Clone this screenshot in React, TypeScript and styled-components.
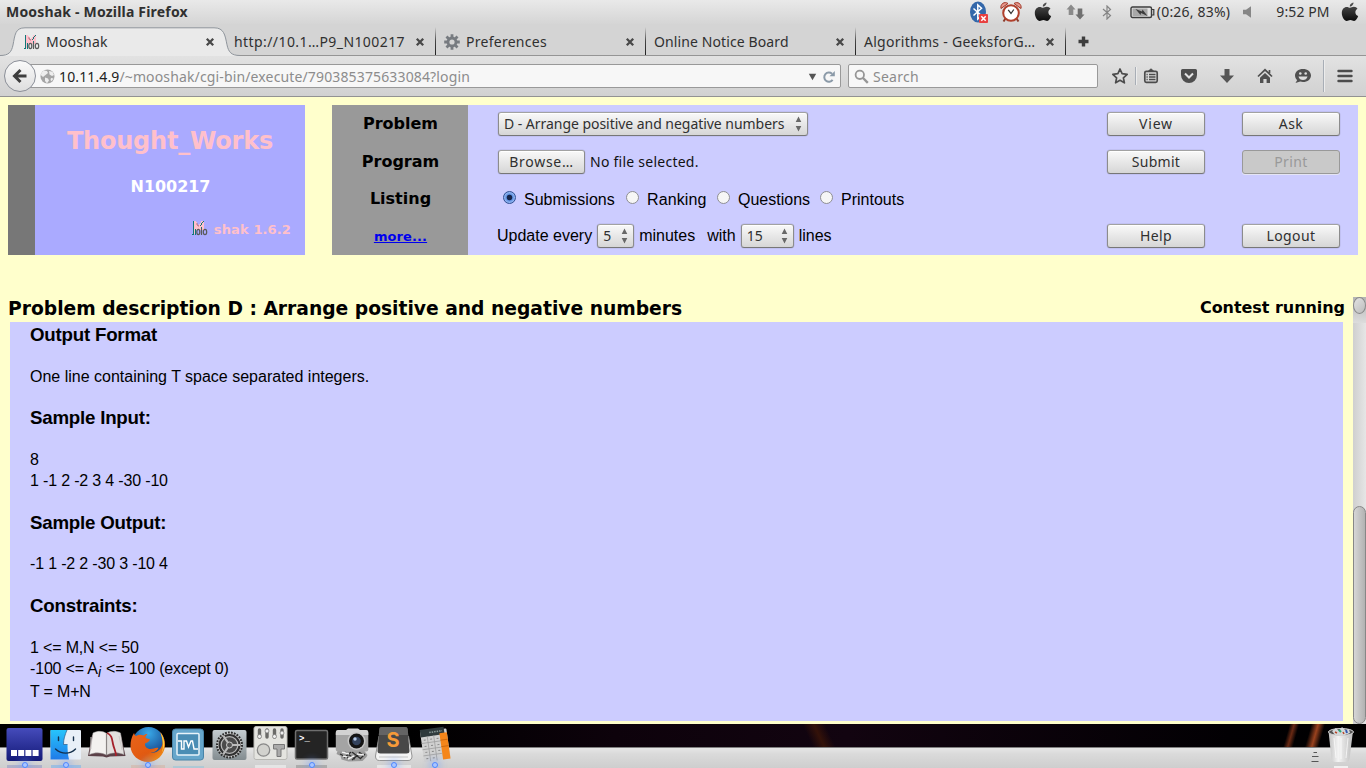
import React from "react";
import styled, { createGlobalStyle } from "styled-components";

const ui = `"Noto Sans", "Open Sans", sans-serif`;
const helv = `"Liberation Sans", Arial, sans-serif`;
const dejavu = `"DejaVu Sans", sans-serif`;

const GlobalStyle = createGlobalStyle`
  * { box-sizing: border-box; }
  body { margin: 0; overflow: hidden; }
  svg { display: block; flex: none; }
`;

const Desktop = styled.div`
  width: 1366px;
  height: 768px;
  display: flex;
  flex-direction: column;
  overflow: hidden;
  background: #ffffcc;
  color: #000;
`;

/* ---------- window chrome ---------- */

const Label = styled.span<{ $ls?: number; $bold?: boolean; $color?: string }>`
  font: ${(p) => (p.$bold ? "bold" : "normal")} 14px/18px ${ui};
  letter-spacing: ${(p) => p.$ls ?? 0.2}px;
  color: ${(p) => p.$color ?? "#303030"};
  white-space: pre;
`;

const TitleBar = styled.header`
  height: 24px;
  flex: none;
  display: flex;
  align-items: center;
  padding: 0 7px 0 6px;
  background: linear-gradient(#e9e9e9, #d5d5d5);
`;

const Tray = styled.div`
  margin-left: auto;
  display: flex;
  align-items: center;
  height: 24px;
`;

const Slot = styled.div<{ $w: number; $ml?: number }>`
  width: ${(p) => p.$w}px;
  margin-left: ${(p) => p.$ml ?? 0}px;
  display: flex;
  justify-content: center;
  white-space: nowrap;
`;

const TabStrip = styled.nav`
  position: relative;
  height: 32px;
  flex: none;
  display: flex;
  padding-left: 15px;
  background: #d4d4d4;
  border-bottom: 1px solid #959595;
`;

const TabShape = styled.svg`
  position: absolute;
  left: 0;
  top: 3px;
`;

const Tab = styled.div<{ $divider?: boolean }>`
  position: relative;
  width: 210px;
  height: 31px;
  margin-top: 1px;
  padding: 3px 10px 0 9px;
  display: flex;
  align-items: center;
  gap: 6px;
  &::after {
    content: "";
    display: ${(p) => (p.$divider ? "block" : "none")};
    position: absolute;
    right: -1px;
    top: 2px;
    width: 1px;
    height: 28px;
    background: linear-gradient(#d4d4d400, #444 50%, #222);
  }
`;

const TabClose = styled.span`
  margin-left: auto;
`;

const NewTab = styled.span`
  margin: 12px 0 0 12.5px;
`;

const NavBar = styled.div`
  height: 41px;
  flex: none;
  display: flex;
  align-items: center;
  background: linear-gradient(#e2e2e2, #d1d1d1);
  border-bottom: 1px solid #929292;
`;

const BackButton = styled.div`
  position: relative;
  z-index: 1;
  width: 32px;
  height: 32px;
  margin: 0 -16px 0 4px;
  flex: none;
  border: 1px solid #8b8f98;
  border-radius: 50%;
  background: linear-gradient(#fafafa, #dedede);
  display: flex;
  align-items: center;
  justify-content: center;
`;

const Field = styled.div<{ $w: number; $pl: number }>`
  width: ${(p) => p.$w}px;
  height: 24px;
  padding: 1px 5px 0 ${(p) => p.$pl}px;
  border: 1px solid #999;
  border-radius: 2px;
  background: #f7f7f7;
  display: flex;
  align-items: center;
  gap: 4px;
  ${Label} {
    line-height: 19px;
  }
`;

const FieldEnd = styled.div`
  margin-left: auto;
  display: flex;
  align-items: center;
  gap: 6px;
`;

const SearchField = styled(Field)`
  margin-left: 7px;
`;

const Divider = styled.i<{ $h: number; $ml: number }>`
  width: 1px;
  height: ${(p) => p.$h}px;
  margin-left: ${(p) => p.$ml}px;
  background: #a8aeb6;
  box-shadow: 1px 0 #ececec;
`;

/* ---------- contest toolbar ---------- */

const Toolbar = styled.section`
  height: 150px;
  margin: 8px 8px 0;
  flex: none;
  display: flex;
`;

const Stripe = styled.div`
  width: 27px;
  background: #777777;
`;

const Team = styled.div`
  width: 270px;
  margin-right: 27px;
  padding-top: 21px;
  background: #aaaaff;
  display: flex;
  flex-direction: column;
  align-items: center;
  font-family: ${dejavu};
  font-weight: bold;
`;

const TeamName = styled.div`
  font-size: 24px;
  line-height: 30px;
  letter-spacing: -0.22px;
  color: #ffc0cb;
`;

const TeamId = styled.div`
  margin-top: 21px;
  padding-left: 1px;
  font-size: 16px;
  line-height: 20px;
  letter-spacing: -0.05px;
  color: #fff;
`;

const Version = styled.div`
  align-self: flex-end;
  margin: 19px 14px 0 0;
  display: flex;
  align-items: center;
  gap: 6px;
  font-size: 13px;
  line-height: 20px;
  letter-spacing: 0.12px;
  color: #ffc0cb;
  span {
    padding-top: 4px;
  }
`;

const rows = "37px 39px 35px 39px";

const Names = styled.div`
  width: 136px;
  padding-left: 1px;
  background: #999999;
  display: grid;
  grid-template-rows: ${rows};
  align-items: center;
  justify-items: center;
  font: bold 16px/20px ${dejavu};
`;

const MoreLink = styled.a`
  font-size: 13px;
  color: #0000ee;
  text-decoration: underline;
  letter-spacing: 0.1px;
  padding-top: 3px;
`;

const Controls = styled.div`
  flex: 1;
  padding: 0 18px 0 29px;
  background: #ccccff;
  display: grid;
  grid-template-rows: ${rows};
`;

const ControlRow = styled.div`
  display: flex;
  align-items: center;
  font: 16px/20px ${helv};
  white-space: pre;
`;

const Button = styled.button<{ $w: number; $ls?: number }>`
  width: ${(p) => p.$w}px;
  height: 24px;
  padding: 0;
  border: 1px solid #8c8c8c;
  border-color: #a2a2a2 #8c8c8c #777;
  border-radius: 3px;
  background: linear-gradient(#f9f9f9, #d6d6d6);
  box-shadow: inset 0 1px #fff, 0 0 0 0.5px rgba(120, 120, 150, 0.25);
  font: 14px/20px ${ui};
  letter-spacing: ${(p) => p.$ls ?? 0.4}px;
  color: #303030;
  &:disabled {
    background: #c9c9c9;
    border-color: #999;
    box-shadow: 0 1px #e4e4f4;
    color: #999;
  }
`;

const Picker = styled(Button)`
  display: flex;
  align-items: center;
  justify-content: space-between;
  padding: 0 5px;
  white-space: nowrap;
`;

const Actions = styled.div`
  margin-left: auto;
  display: flex;
  gap: 37px;
`;

const Gap = styled.span<{ $w: number }>`
  width: ${(p) => p.$w}px;
`;

const RadioLabel = styled.label<{ $w: number; $ls?: number }>`
  width: ${(p) => p.$w}px;
  display: flex;
  align-items: center;
  gap: 8px;
  padding-top: 2px;
  letter-spacing: ${(p) => p.$ls ?? 0}px;
`;

const Radio = styled.i<{ $on?: boolean }>`
  width: 13px;
  height: 13px;
  margin-top: -4px;
  flex: none;
  border: 1px solid ${(p) => (p.$on ? "#2f4f93" : "#8e8e93")};
  border-radius: 50%;
  background: ${(p) =>
    p.$on
      ? "radial-gradient(circle, #16244a 0 2.4px, #5d8ee0 3.2px, #8fb4f0 5px, #5580cf)"
      : "#f6f6f6"};
`;

/* ---------- problem frame ---------- */

const Frame = styled.main`
  flex: none;
  height: 427px;
  margin-top: 42px;
  display: flex;
`;

const Page = styled.article`
  flex: 1;
  padding: 0 10px;
`;

const Heading = styled.div`
  height: 25px;
  margin: 0 -2px;
  display: flex;
  justify-content: space-between;
  font-family: ${dejavu};
  font-weight: bold;
  white-space: nowrap;
`;

const ProblemTitle = styled.span`
  font-size: 18.72px;
  line-height: 23px;
  letter-spacing: -0.01px;
`;

const Status = styled.span`
  font-size: 16px;
  line-height: 21px;
  letter-spacing: -0.05px;
`;

const Statement = styled.div`
  height: 399px;
  padding: 2px 20px 0;
  background: #ccccff;
  font: 16px/21px ${helv};
`;

const H3 = styled.h3<{ $mt?: number }>`
  margin: ${(p) => p.$mt ?? 20}px 0 0;
  font-size: 18.72px;
  line-height: 21px;
  letter-spacing: -0.22px;
`;

const Para = styled.p<{ $ls?: number; $mt?: number }>`
  margin: ${(p) => p.$mt ?? 21}px 0 0;
  letter-spacing: ${(p) => p.$ls ?? -0.17}px;
  sub {
    margin-right: 1px;
    font-style: italic;
    font-size: 14px;
    line-height: 18px;
    vertical-align: -2.5px;
  }
`;

const Scrollbar = styled.aside`
  width: 13px;
  display: flex;
  flex-direction: column;
  background: linear-gradient(90deg, #cfcfcf, #e6e6e6);
`;

const Stepper = styled.div`
  height: 26px;
  background: linear-gradient(#b4b4b4, #dcdcdc);
  &::before {
    content: "";
    display: block;
    height: 15px;
    border: 1px solid #8a8a8a;
    border-radius: 50%;
    background: linear-gradient(135deg, #e2e2e2, #bcbcbc);
  }
`;

const Thumb = styled.div`
  height: 218px;
  margin-top: auto;
  border: 1px solid #878787;
  border-radius: 7px;
  background: linear-gradient(90deg, #d6d6d6, #b2b2b2);
`;

/* ---------- dock ---------- */

const Dock = styled.footer`
  height: 44px;
  flex: none;
  display: flex;
  padding: 0 3px 0 3.5px;
  background:
    linear-gradient(#808080, #808080) 0 23px / 100% 1px no-repeat,
    linear-gradient(#e6e6e6, #dadada 30%, #cecece) 0 24px / 100% 20px no-repeat,
    linear-gradient(106deg, transparent 34%, #6a2a14 50%, transparent 68%) 1280px 0 / 22px 23px no-repeat,
    linear-gradient(106deg, transparent 30%, #9a421e 50%, transparent 70%) 1301px 0 / 28px 23px no-repeat,
    linear-gradient(65deg, transparent 30%, #341209 50%, transparent 70%) 796px 0 / 46px 23px no-repeat,
    linear-gradient(90deg, #000 30%, #0d020b 45%, #120410 62%, #020003 90%, #000);
`;

const DockCell = styled.div<{ $running?: boolean }>`
  position: relative;
  width: 41px;
  height: 44px;
  &::after {
    content: "";
    display: ${(p) => (p.$running ? "block" : "none")};
    position: absolute;
    left: 18px;
    bottom: 0;
    width: 4px;
    height: 4px;
    border: 1px solid #4f86ff;
    border-radius: 50%;
    background: #a9c6ff;
    box-shadow: 0 0 6px 4px rgba(110, 155, 255, 0.3);
  }
`;

const DockEnd = styled.div`
  margin-left: auto;
  display: flex;
  gap: 3px;
`;

/* ---------- small glyphs ---------- */

const Moo = () => (
  <svg width="16" height="15" viewBox="0 0 16 15">
    <path d="M2 0h2v1h1v2h1v1h1V3h1V2h1V0h3v9H2z" fill="#ffc0cb" />
    <path d="M2 9h2v4H2z" fill="#ffc0cb" />
    <g shapeRendering="crispEdges" fill="#107878">
      <path d="M1 0h1v13H1zM0 13h2v1H0zM3 8h1v6H3zM10 1h1v1h-1zM9 2h1v2H9zM8 4h1v1H8zM9 6h1v3H9zM11 0h1v1h-1z" />
    </g>
    <path d="M5 2v2h1v1h1" stroke="#a05a68" strokeWidth=".7" fill="none" />
    <g fill="none" stroke="#5a5a5a" strokeWidth="1.200">
      <ellipse cx="6.300" cy="11" rx="1.500" ry="2.700" />
      <path d="M9.500 7.500v6.500" />
      <ellipse cx="13" cy="11" rx="1.700" ry="2.700" />
    </g>
  </svg>
);

const CloseX = () => (
  <svg width="10" height="10" viewBox="0 0 10 10">
    <path d="M1.800 1.800l6.400 6.400M8.200 1.800L1.800 8.200" stroke="#484848" strokeWidth="2.300" />
  </svg>
);

const Gear = () => (
  <svg width="16" height="16" viewBox="0 0 16 16" stroke="#777b80" fill="none">
    <circle cx="8" cy="8" r="4" strokeWidth="2.800" />
    <g strokeWidth="2.800">
      <path d="M8 .2v3M8 12.800v3M.2 8h3M12.800 8h3M2.500 2.500l2.200 2.200M11.300 11.300l2.200 2.200M13.500 2.500l-2.200 2.200M4.700 11.300l-2.200 2.200" />
    </g>
  </svg>
);

const Apple = () => (
  <svg width="18" height="20" viewBox="0 0 18 20">
    <defs>
      <linearGradient id="apple" x1="0" y1="0" x2="0" y2="1">
        <stop offset="0" stopColor="#555" />
        <stop offset="1" stopColor="#0c0c0c" />
      </linearGradient>
    </defs>
    <path
      d="M12.500.5c.2 1.800-1.600 4-3.700 4C8.500 2.600 10.400.8 12.500.5zM9 5.800c1 0 2.100-1 3.900-1 1.600 0 2.900.8 3.600 1.900-3.200 1.900-2.600 6 .7 7.300-.8 2.200-2.300 5-4.100 5-1.500 0-2-.9-3.700-.9s-2.300.9-3.700.9C3.400 19 .8 14.800.8 11c0-3.800 2.400-6 4.800-6C7.200 5 8.300 5.800 9 5.800z"
      fill="url(#apple)"
    />
  </svg>
);

const BluetoothBadge = () => (
  <svg width="22" height="23" viewBox="0 0 22 23">
    <ellipse cx="11" cy="11" rx="8" ry="10.500" fill="#3468aa" />
    <path d="M6.500 7.500l8 7.300-3.700 3.200V4l3.700 3.200-8 7.300" fill="none" stroke="#fff" strokeWidth="1.500" />
    <rect x="12" y="13" width="9" height="9" rx="1" fill="#e84040" />
    <path d="M14.300 15.300l4.400 4.400M18.700 15.300l-4.400 4.400" stroke="#fff" strokeWidth="1.500" />
  </svg>
);

const Alarm = () => (
  <svg width="22" height="22" viewBox="0 0 22 22">
    <path d="M5.500 17.500L3.500 20.500M16.500 17.500l2 3" stroke="#8b3b2a" strokeWidth="2" />
    <path d="M1 7.500C0 3 4.500 0 8 2.500zM21 7.500C22 3 17.500 0 14 2.500z" fill="#e8988c" stroke="#a03828" />
    <circle cx="11" cy="12" r="7.800" fill="#fff" stroke="#b0402c" strokeWidth="2" />
    <path d="M8.200 8.800L11 12.500l2.800-4" fill="none" stroke="#333" strokeWidth="1.300" />
  </svg>
);

const UpDown = () => (
  <svg width="19" height="16" viewBox="0 0 19 16">
    <path d="M5 .5l4.500 5H7.300V11H2.700V5.500H.5z" fill="#8b8b8b" />
    <path d="M14 15.500l4.500-5h-2.200V4.500h-4.600v6H9.500z" fill="#707070" />
  </svg>
);

const Bluetooth = () => (
  <svg width="10" height="15" viewBox="0 0 10 15">
    <path d="M1 4l7.500 6.500L5 14V1l3.500 3.500L1 11" fill="none" stroke="#858585" strokeWidth="1.200" />
  </svg>
);

const Battery = () => (
  <svg width="25" height="13" viewBox="0 0 25 13">
    <rect x="1" y="1" width="20.500" height="10.500" rx="1.500" fill="#e4e4e4" stroke="#3c3c3c" strokeWidth="1.400" />
    <path d="M22 3.500h1.800v5.500H22" fill="none" stroke="#3c3c3c" strokeWidth="1.200" />
    <rect x="2.500" y="2.500" width="15" height="7.500" fill="#a8a8a8" />
    <path d="M5.500 3l6.500 2.500.5-2 5 6.500-6.500-3-.5 2z" fill="#3c3c3c" />
  </svg>
);

const Speaker = () => (
  <svg width="9" height="12" viewBox="0 0 9 12">
    <path d="M0 3.800h3L8 .3v11.400L3 8.200H0z" fill="#868686" />
  </svg>
);

const BackArrow = () => (
  <svg width="16" height="16" viewBox="0 0 16 16">
    <path d="M8.500 2L2.500 8l6 6M3 8h11.500" fill="none" stroke="#3e3e3e" strokeWidth="3" />
  </svg>
);

const Globe = () => (
  <svg width="15" height="15" viewBox="0 0 15 15">
    <circle cx="7.500" cy="7.500" r="7" fill="#a5a5a5" />
    <path d="M4 1.500l3 .5 1 2-2.500 2L3 8 .8 6C1.200 4 2.500 2.300 4 1.500zM9 2l3.500.8L14 6l-2 1-2.500-1.500zM5 8.500l3 1 1 2-2 2.800-2-2.300zM11 9l2.500.5-2 2.800-1-1.300z" fill="#eee" />
  </svg>
);

const Reload = () => (
  <svg width="12" height="12" viewBox="0 0 12 12">
    <path d="M9.600 8.800A4.600 4.600 0 1 1 9 2.700" fill="none" stroke="#8b9aa8" strokeWidth="2" />
    <path d="M11.800 0v5.200H6.500z" fill="#8b9aa8" />
  </svg>
);

const Magnifier = () => (
  <svg width="15" height="15" viewBox="0 0 15 15" fill="none" stroke="#969696">
    <circle cx="5.800" cy="5.800" r="4.200" strokeWidth="1.800" />
    <path d="M9 9l4.800 4.800" strokeWidth="2.400" />
  </svg>
);

const Arrows = () => (
  <svg width="7" height="17" viewBox="0 0 7 17" fill="#686868">
    <path d="M3.500 1.500L6.300 7H.7zM3.500 16.500L6.300 11H.7z" />
  </svg>
);

const Star = () => (
  <svg width="18" height="18" viewBox="0 0 18 18">
    <path d="M9 2l2.100 4.700 5.100.6-3.800 3.500 1 5L9 13.300l-4.400 2.500 1-5L1.800 7.300l5.100-.6z" fill="none" stroke="#4c4c4c" strokeWidth="1.700" strokeLinejoin="round" />
  </svg>
);

const ListIcon = () => (
  <svg width="16" height="16" viewBox="0 0 16 16" fill="none" stroke="#4c4c4c">
    <rect x="1.800" y="3.300" width="12.400" height="11" rx="1.500" strokeWidth="1.700" />
    <path d="M5 3.500L8 .8l3 2.700z" fill="#4c4c4c" />
    <path d="M6 6.500h6.500M6 9h6.500M6 11.500h6.500M3.500 6.500h1.200M3.500 9h1.200M3.500 11.500h1.200" strokeWidth="1.300" />
  </svg>
);

const Pocket = () => (
  <svg width="18" height="16" viewBox="0 0 18 16">
    <path d="M2.500 1h13A1.500 1.500 0 0 1 17 2.500V7a8 8 0 0 1-16 0V2.500A1.500 1.500 0 0 1 2.500 1z" fill="#4f4f4f" />
    <path d="M5 5.500l4 4 4-4" fill="none" stroke="#e4e4e4" strokeWidth="2" />
  </svg>
);

const Download = () => (
  <svg width="16" height="16" viewBox="0 0 16 16">
    <path d="M5.500 1h5v6.500H15L8 15 1 7.500h4.500z" fill="#565656" />
  </svg>
);

const Home = () => (
  <svg width="16" height="16" viewBox="0 0 16 16">
    <path d="M1 8.500L8 1.800l7 6.700M12.500 2v3" fill="none" stroke="#505050" strokeWidth="1.700" />
    <path d="M3 9.800l5-4.800 5 4.800V15H9.600v-4H6.400v4H3z" fill="#505050" />
  </svg>
);

const Chat = () => (
  <svg width="18" height="16" viewBox="0 0 18 16">
    <path d="M9 1c4.500 0 8 2.700 8 6.500S13.500 14 9 14c-1 0-2-.1-2.800-.4L1.500 15l1.700-3C1.800 11 1 9.300 1 7.500 1 3.700 4.500 1 9 1z" fill="#505050" />
    <circle cx="6.300" cy="5.500" r="1.300" fill="#ddd" />
    <circle cx="11.700" cy="5.500" r="1.300" fill="#ddd" />
    <path d="M4.500 8.500h9c-.5 2.500-2.300 3.500-4.500 3.500S5 11 4.500 8.500z" fill="#ddd" />
  </svg>
);

const Menu = () => (
  <svg width="16" height="14" viewBox="0 0 16 14" stroke="#4c4c4c" strokeWidth="2.400" strokeLinecap="round">
    <path d="M1.500 2h13M1.500 7h13M1.500 12h13" />
  </svg>
);

/* ---------- dock artwork, one 41x44 cell each ---------- */

const art = { width: 41, height: 44, viewBox: "0 0 41 44" };

const Launcher = () => (
  <svg {...art}>
    <defs>
      <linearGradient id="launch" x1="0" y1="0" x2="0" y2="1">
        <stop offset="0" stopColor="#454bbb" />
        <stop offset="1" stopColor="#141a78" />
      </linearGradient>
    </defs>
    <rect x="2.500" y="4" width="36" height="33" rx="2" fill="url(#launch)" />
    <path d="M7 26h6v6H7zM14.200 26h6v6h-6zM21.400 26h6v6h-6zM28.600 26h6v6h-6z" fill="#fff" />
    <path d="M3 41h35v3H3z" fill="#8a8fc4" opacity=".5" />
  </svg>
);

const Finder = () => (
  <svg {...art}>
    <defs>
      <linearGradient id="finder" x1="0" y1="0" x2="0" y2="1">
        <stop offset="0" stopColor="#27c4fb" />
        <stop offset="1" stopColor="#1f7be8" />
      </linearGradient>
    </defs>
    <rect x="5.500" y="6" width="30.500" height="29.500" rx="1" fill="#e9f0f8" />
    <path d="M5.500 6H22c-2 5-3.500 9-3.500 14.500h4c0 5 .3 10 1.500 15H5.500z" fill="url(#finder)" />
    <path d="M13.500 13v3.500M28.500 13v3.500M10.500 25c6 5.500 14.500 5.500 20 0" fill="none" stroke="#15304c" strokeWidth="1.400" strokeLinecap="round" />
    <path d="M22 6c-2 5-3.500 9-3.500 14.500h4" fill="none" stroke="#2a5a8a" strokeWidth=".7" />
    <path d="M6 41h30v3H6z" fill="#80b4ea" opacity=".6" />
  </svg>
);

const Book = () => (
  <svg {...art}>
    <path d="M6 11L2 32l15 .5 3.500 1 3.500-1L39.500 32 35 11z" fill="#5c4148" />
    <path d="M7 9c5-2.500 10-2 13.500.5V31c-5-2.500-11-3-17-.5z" fill="#f3f1ef" stroke="#aaa" strokeWidth=".5" />
    <path d="M34.500 9c-5-2.500-10.500-2-14 .5V31c5-2.500 11.500-3 17.500-.5z" fill="#e3e0de" stroke="#aaa" strokeWidth=".5" />
    <path d="M20.500 9.500V31" stroke="#8a8584" strokeWidth="1.200" />
    <path d="M21 9c5 2 5 6 6 11s3 7 3 12" fill="none" stroke="#a5202a" strokeWidth="1.800" />
    <path d="M5 13v12M33 12l3 14" stroke="#d0cccb" />
  </svg>
);

const Firefox = () => (
  <svg {...art}>
    <defs>
      <radialGradient id="fxblue" cx=".5" cy=".2" r=".8">
        <stop offset="0" stopColor="#38a8e8" />
        <stop offset="1" stopColor="#12357c" />
      </radialGradient>
      <linearGradient id="fxfox" x1="0" y1="0" x2="1" y2="1">
        <stop offset="0" stopColor="#e8641c" />
        <stop offset=".6" stopColor="#e25a10" />
        <stop offset="1" stopColor="#f5a41c" />
      </linearGradient>
    </defs>
    <circle cx="21.500" cy="19" r="16" fill="url(#fxblue)" />
    <path d="M33 8c3 3 5.500 8 5 14-1 9-8 16-17 16S3.500 31 3.500 22c0-5 1-9 3.500-13 .5 1.500 1 2.500 2 3 2.500-1.500 5-1.500 7.500-.5 1-1 2.500-1.700 4-1.500-1.500 1.500-2 2.500-2 4 1.500.8 3 1 4.500 1.200-.5 2.500-3 3.300-5 4.300-.5 3 2 5.500 5.500 5.500 3 0 5-2 8-1-1.500 3-4.500 4.500-8 4.500 6 1.500 11.500-3.500 12-9.500.2-4-1-8-2.500-11z" fill="url(#fxfox)" />
    <path d="M33.500 8.500c4 5 5.500 13 1.500 20 2-8 .5-14-1.500-20z" fill="#fbd23c" />
    <path d="M4 41h34v3H4z" fill="#d8a890" opacity=".4" />
  </svg>
);

const Monitor = () => (
  <svg {...art}>
    <rect x="4.500" y="5" width="31" height="31" rx="3" fill="#66a6cb" stroke="#4884a8" />
    <rect x="9" y="9.500" width="22" height="21.500" rx="1" fill="#4a8db4" stroke="#e8f4fa" strokeWidth="1.500" />
    <path d="M10 17h3.500v8h2.500v-8h2.500l2 6 2.500-6h1.500l1.500 8h4" fill="none" stroke="#fff" strokeWidth="1.400" />
    <path d="M5 42h31v2H5z" fill="#9ac4d8" opacity=".6" />
  </svg>
);

const Settings = () => (
  <svg {...art}>
    <defs>
      <linearGradient id="prefs" x1="0" y1="0" x2="0" y2="1">
        <stop offset="0" stopColor="#c4ccd0" />
        <stop offset="1" stopColor="#838c90" />
      </linearGradient>
    </defs>
    <rect x="3.500" y="6" width="34" height="30" rx="2" fill="url(#prefs)" />
    <circle cx="20.500" cy="21" r="12.500" fill="#d0d0d0" stroke="#2e2e2e" strokeWidth="2" strokeDasharray="1.800 1.200" />
    <circle cx="20.500" cy="21" r="10" fill="#4a4a4a" stroke="#303030" strokeWidth="2" />
    <path d="M20.500 21L31 21M20.500 21l-6-9M20.500 21l-6 9" stroke="#bbb" strokeWidth="2.200" />
    <circle cx="20.500" cy="21" r="8.300" fill="none" stroke="#b8b8b8" strokeWidth="1.200" />
    <circle cx="20.500" cy="21" r="3" fill="#555" stroke="#ccc" />
  </svg>
);

const Tweaks = () => (
  <svg {...art}>
    <rect x="4" y="2.500" width="33" height="33" rx="2" fill="#e4e4e0" stroke="#b8b8b4" />
    <g stroke="#6a6a68" strokeWidth="3.400" strokeLinecap="round">
      <path d="M9.500 6v7M17 6v7M24.500 6v7M32 6v7" />
    </g>
    <g fill="#eee" stroke="#777" strokeWidth=".7">
      <circle cx="9.500" cy="12.500" r="2" />
      <circle cx="17" cy="7" r="2" />
      <circle cx="24.500" cy="12.500" r="2" />
      <circle cx="32" cy="9" r="2" />
    </g>
    <circle cx="13.500" cy="26" r="6.200" fill="#d2d2ce" stroke="#888" strokeWidth="1.300" />
    <path d="M23.500 20.500h11v4.500h-3.500v7.500h-4V25h-3.500z" fill="#aaa" stroke="#777" />
    <path d="M5 41h31v3H5z" fill="#eee" opacity=".7" />
  </svg>
);

const Terminal = () => (
  <svg {...art}>
    <rect x="4.500" y="6.500" width="32" height="28.500" rx="1.500" fill="#242424" stroke="#6e6e6e" strokeWidth="1.500" />
    <text x="8" y="17" fontFamily="Liberation Mono, monospace" fontSize="9" fontWeight="bold" fill="#fff">
      &gt;_
    </text>
    <path d="M5 41h31v3H5z" fill="#888" opacity=".5" />
  </svg>
);

const Camera = () => (
  <svg {...art}>
    <path d="M6 26l-1.500 4 4 2 1 3.500 7 2 14-.5 4-4 1-2-4-5z" fill="#9a9a9a" />
    <path d="M8 30l8 4M13 28l10 7M20 28l9 7M27 28l5 4M12 34l7-6M20 36l8-7M28 35l5-5" stroke="#2c2c2c" strokeWidth="1.200" />
    <path d="M10 28l7 2M16 35l6-3M25 30l7 1M11 32l4 1" stroke="#f0f0f0" strokeWidth="1.400" />
    <rect x="3.800" y="7" width="32.500" height="20.500" rx="2" fill="#a4a4a4" />
    <path d="M3.800 11V8a2 2 0 0 1 2-2H14l2-1.500h10L28 6h6.300a2 2 0 0 1 2 2v3z" fill="#d2d2d2" />
    <circle cx="24.500" cy="17" r="9" fill="#c8c8c8" />
    <circle cx="24.500" cy="17" r="7.500" fill="#141414" />
    <circle cx="24.500" cy="17" r="4.300" fill="#33425c" />
    <circle cx="23" cy="15" r="1.700" fill="#b4c8e4" />
  </svg>
);

const Editor = () => (
  <svg {...art}>
    <path d="M6 12L2.500 32q0 4.500 4 4.500h28.500q4 0 4-4.500L35.500 12z" fill="#f4f4f4" stroke="#8a8a8a" strokeWidth=".9" />
    <path d="M8.500 3h24q2 0 2.200 2L36.500 27q0 2.500-3 2.500H7.500q-3 0-3-2.500L6.300 5q0-2 2.200-2z" fill="#484848" />
    <path d="M8.500 3h24q2 0 2.200 2l.5 6H5.800L6.300 5q0-2 2.200-2z" fill="#646464" />
    <path d="M6 33h29" stroke="#c4c4c4" />
    <text x="20" y="23" textAnchor="middle" fontFamily="Inter, sans-serif" fontSize="20" fontWeight="bold" fill="#f79a38">
      S
    </text>
    <path d="M4 41h34v3H4z" fill="#eee" opacity=".7" />
  </svg>
);

const Calculator = () => (
  <svg {...art}>
    <g transform="rotate(-8 21 21)">
      <rect x="8" y="6" width="26.500" height="30.500" rx="1" fill="#d0d0d0" />
      <rect x="8" y="4" width="24" height="7.500" fill="#2f3a3c" />
      <path d="M27 10h7.500v26.500H27z" fill="#f5861a" />
      <path d="M8 17.700h19M8 24h19M8 30.200h19M14.500 11.500v25M21 11.500v25" stroke="#a0a0a0" strokeWidth=".8" />
      <path d="M27 17h7.500M27 23.500h7.500" stroke="#c8640c" strokeWidth=".8" />
      <path d="M10.500 14.700h2M17 14.700h2M23.500 14.700h2M10.500 21h2M17 21h2M23.500 21h2M10.500 27h2M17 27h2M23.500 27h2M10.500 33.500h2M17 33.500h2" stroke="#888" />
      <path d="M17 7.800h13" stroke="#8a9a98" strokeWidth="1.500" strokeDasharray="1.500 1" />
    </g>
  </svg>
);

const StackMark = () => (
  <svg width="8" height="44" viewBox="0 0 8 44" stroke="#555">
    <path d="M2.500 28.500h3.500M1 32.500h6.500M.5 37.500h7" />
  </svg>
);

const Trash = () => (
  <svg {...art}>
    <defs>
      <linearGradient id="bin" x1="0" y1="0" x2="1" y2="0">
        <stop offset="0" stopColor="#c2c2c2" />
        <stop offset=".4" stopColor="#f4f4f4" />
        <stop offset="1" stopColor="#bdbdbd" />
      </linearGradient>
    </defs>
    <path d="M6.500 7l3 28q.5 3 4 3h10q3.500 0 4-3l3.500-28z" fill="url(#bin)" />
    <path d="M12 14l2 20M19 14v21M26 14l-2 20" stroke="#fff" opacity=".7" />
    <ellipse cx="19" cy="8" rx="12.500" ry="3.500" fill="#555" stroke="#d8d8d8" />
    <path d="M10 7l4-3 3 3 3-4 3 3 4-1 1 4-5 2H13z" fill="#d4d8da" />
    <path d="M17 6l2 2" stroke="#28a878" strokeWidth="2" />
    <path d="M24 6l1 3" stroke="#3358b0" strokeWidth="2" />
    <path d="M13 8l2 1M21 8l1 2" stroke="#b84828" strokeWidth="1.500" />
    <path d="M12 42h14v2H12z" fill="#f0f0f0" />
  </svg>
);

const apps = [
  { Icon: Launcher, running: true },
  { Icon: Finder, running: true },
  { Icon: Book },
  { Icon: Firefox, running: true },
  { Icon: Monitor },
  { Icon: Settings },
  { Icon: Tweaks },
  { Icon: Terminal, running: true },
  { Icon: Camera },
  { Icon: Editor, running: true },
  { Icon: Calculator, running: true },
];

const tabs = [
  { title: "Mooshak", ls: 0.19, icon: <Moo /> },
  { title: "http://10.1…P9_N100217", ls: 0.42, divider: true },
  { title: "Preferences", ls: 0.27, icon: <Gear />, divider: true },
  { title: "Online Notice Board", ls: 0.11, divider: true },
  { title: "Algorithms - GeeksforG…", ls: 0.28, divider: true },
];

export default function App() {
  return (
    <Desktop>
      <GlobalStyle />
      <TitleBar>
        <Label $bold $ls={0.19}>Mooshak - Mozilla Firefox</Label>
        <Tray>
          <Slot $w={22}><BluetoothBadge /></Slot>
          <Slot $w={22} $ml={11}><Alarm /></Slot>
          <Slot $w={18} $ml={12}><Apple /></Slot>
          <Slot $w={19} $ml={14}><UpDown /></Slot>
          <Slot $w={10} $ml={17}><Bluetooth /></Slot>
          <Slot $w={25} $ml={18}><Battery /></Slot>
          <Slot $w={75} $ml={1}><Label>(0:26, 83%)</Label></Slot>
          <Slot $w={9} $ml={12}><Speaker /></Slot>
          <Slot $w={54} $ml={24}><Label $ls={0.1}>9:52 PM</Label></Slot>
          <Slot $w={18} $ml={11}><Apple /></Slot>
        </Tray>
      </TitleBar>

      <TabStrip>
        <TabShape width="245" height="29" viewBox="0 0 245 29">
          <path
            d="M0 28.500C9 28.500 11.500 25 13 18 15 8 15 .8 25 .8H214c10 0 11 7 13 17 1.500 7 4 10.700 13 10.700V29H0z"
            fill="#eaeaea"
          />
          <path
            d="M0 28.500C9 28.500 11.500 25 13 18 15 8 15 .8 25 .8H214c10 0 11 7 13 17 1.500 7 4 10.700 13 10.700"
            fill="none"
            stroke="#8f959c"
          />
        </TabShape>
        {tabs.map((t) => (
          <Tab key={t.title} $divider={t.divider}>
            {t.icon}
            <Label $ls={t.ls}>{t.title}</Label>
            <TabClose><CloseX /></TabClose>
          </Tab>
        ))}
        <NewTab>
          <svg width="11" height="11" viewBox="0 0 11 11">
            <path d="M5.500.5v10M.5 5.500h10" stroke="#3e3e3e" strokeWidth="3.400" />
          </svg>
        </NewTab>
      </TabStrip>

      <NavBar>
        <BackButton><BackArrow /></BackButton>
        <Field $w={821} $pl={19}>
          <Globe />
          <span>
            <Label $ls={0.12} $color="#222">10.11.4.9</Label>
            <Label $ls={0.14} $color="#8c8c8c">/~mooshak/cgi-bin/execute/790385375633084?login</Label>
          </span>
          <FieldEnd>
            <svg width="9" height="8" viewBox="0 0 9 8">
              <path d="M.8.8h7.400L4.500 7.300z" fill="#555" />
            </svg>
            <Reload />
          </FieldEnd>
        </Field>
        <SearchField $w={250} $pl={5}>
          <Magnifier />
          <Label $ls={0.26} $color="#8c8c8c">Search</Label>
        </SearchField>
        <Slot $w={18} $ml={13}><Star /></Slot>
        <Divider $h={18} $ml={6} />
        <Slot $w={16} $ml={7}><ListIcon /></Slot>
        <Slot $w={18} $ml={21}><Pocket /></Slot>
        <Slot $w={16} $ml={21}><Download /></Slot>
        <Slot $w={16} $ml={22}><Home /></Slot>
        <Slot $w={18} $ml={21}><Chat /></Slot>
        <Divider $h={32} $ml={11} />
        <Slot $w={16} $ml={13}><Menu /></Slot>
      </NavBar>

      <Toolbar>
        <Stripe />
        <Team>
          <TeamName>Thought_Works</TeamName>
          <TeamId>N100217</TeamId>
          <Version><Moo /><span>shak 1.6.2</span></Version>
        </Team>
        <Names>
          <span>Problem</span>
          <span>Program</span>
          <span>Listing</span>
          <MoreLink>more...</MoreLink>
        </Names>
        <Controls>
          <ControlRow>
            <Gap $w={1} />
            <Picker $w={310} $ls={-0.04}>D - Arrange positive and negative numbers<Arrows /></Picker>
            <Actions>
              <Button $w={98} $ls={0.8}>View</Button>
              <Button $w={98}>Ask</Button>
            </Actions>
          </ControlRow>
          <ControlRow>
            <Gap $w={1} />
            <Button $w={87} $ls={0.7}>Browse…</Button>
            <Gap $w={5} />
            <Label $ls={0.25} $color="#111">No file selected.</Label>
            <Actions>
              <Button $w={98} $ls={0.27}>Submit</Button>
              <Button $w={98} disabled>Print</Button>
            </Actions>
          </ControlRow>
          <ControlRow>
            <Gap $w={6} />
            <RadioLabel $w={123}><Radio $on />Submissions</RadioLabel>
            <RadioLabel $w={91} $ls={0.1}><Radio />Ranking</RadioLabel>
            <RadioLabel $w={103}><Radio />Questions</RadioLabel>
            <RadioLabel $w={90}><Radio />Printouts</RadioLabel>
          </ControlRow>
          <ControlRow>
            Update every<Gap $w={5} />
            <Picker $w={37}>5<Arrows /></Picker>
            <Gap $w={5} />minutes<Gap $w={12} />with<Gap $w={5} />
            <Picker $w={53} $ls={0}>15<Arrows /></Picker>
            <Gap $w={5} />lines
            <Actions>
              <Button $w={98}>Help</Button>
              <Button $w={98}>Logout</Button>
            </Actions>
          </ControlRow>
        </Controls>
      </Toolbar>

      <Frame>
        <Page>
          <Heading>
            <ProblemTitle>Problem description D : Arrange positive and negative numbers</ProblemTitle>
            <Status>Contest running</Status>
          </Heading>
          <Statement>
            <H3 $mt={0}>Output Format</H3>
            <Para $ls={0}>One line containing T space separated integers.</Para>
            <H3>Sample Input:</H3>
            <Para>8<br />1 -1 2 -2 3 4 -30 -10</Para>
            <H3 $mt={21}>Sample Output:</H3>
            <Para $mt={20}>-1 1 -2 2 -30 3 -10 4</Para>
            <H3 $mt={21}>Constraints:</H3>
            <Para>
              1 &lt;= M,N &lt;= 50<br />
              -100 &lt;= A<sub>i</sub> &lt;= 100 (except 0)<br />
              T = M+N
            </Para>
          </Statement>
        </Page>
        <Scrollbar>
          <Stepper />
          <Thumb />
        </Scrollbar>
      </Frame>

      <Dock>
        {apps.map(({ Icon, running }, i) => (
          <DockCell key={i} $running={running}><Icon /></DockCell>
        ))}
        <DockEnd>
          <StackMark />
          <Trash />
        </DockEnd>
      </Dock>
    </Desktop>
  );
}
